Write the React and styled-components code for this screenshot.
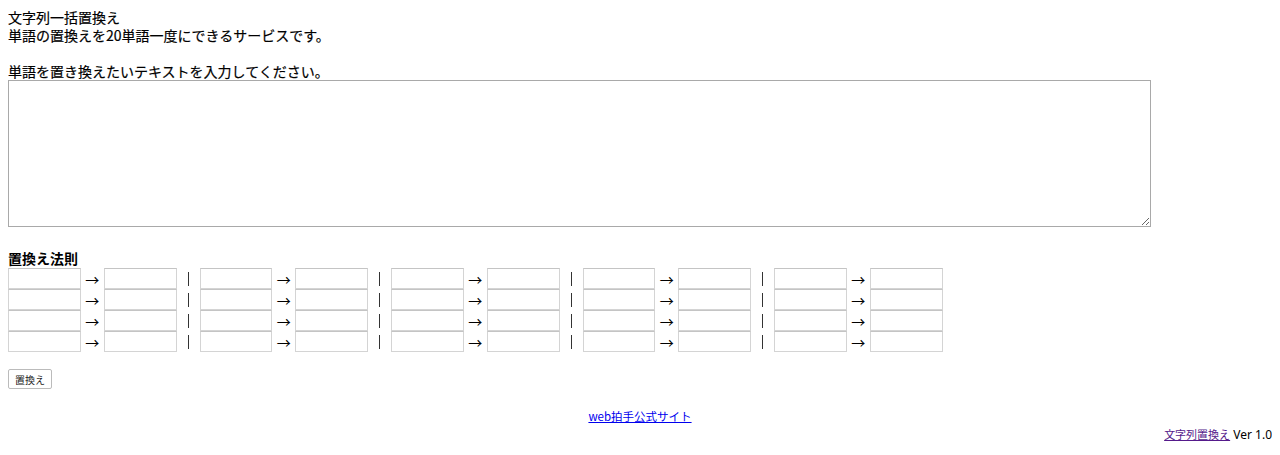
import React from 'react'
import styled, { createGlobalStyle } from 'styled-components'

const GlobalStyle = createGlobalStyle`
  body {
    margin: 8px;
    font-family: "Noto Sans CJK JP", "Noto Sans", sans-serif;
    font-size: 14px;
    line-height: 18px;
    color: #000;
    background: #fff;
  }
`

const groups = [0, 1, 2, 3, 4]
const rows = [0, 1, 2, 3]

function App() {
  return (
    <>
      <GlobalStyle />
      <Intro>
        <Line>文字列一括置換え</Line>
        <Line>単語の置換えを20単語一度にできるサービスです。</Line>
        <Line>&nbsp;</Line>
        <Line>単語を置き換えたいテキストを入力してください。</Line>
      </Intro>
      <TextArea />
      <RuleTitle>置換え法則</RuleTitle>
      <Rules>
        {rows.map((r) => (
          <RuleRow key={r}>
            {groups.map((g) => (
              <Pair key={g}>
                <Field type='text' />
                <Arrow>→</Arrow>
                <Field type='text' />
                {g < groups.length - 1 && <Sep />}
              </Pair>
            ))}
          </RuleRow>
        ))}
      </Rules>
      <Button>置換え</Button>
      <Center>
        <Link href='#'>web拍手公式サイト</Link>
      </Center>
      <Footer>
        <Visited href='#'>文字列置換え</Visited> Ver 1.0
      </Footer>
    </>
  )
}

const Intro = styled.div`
  display: flex;
  flex-direction: column;
`

const Line = styled.div`
  height: 18px;
  font-weight: 400;
  -webkit-text-stroke: 0.2px #000;
`

const TextArea = styled.textarea`
  display: block;
  box-sizing: border-box;
  width: 1143px;
  height: 147px;
  margin: 0;
  border: 1px solid #a9a9a9;
  resize: both;
`

const RuleTitle = styled.div`
  margin-top: 22px;
  height: 19px;
  font-weight: 700;
  line-height: 19px;
`

const Rules = styled.div`
  display: flex;
  flex-direction: column;
`

const RuleRow = styled.div`
  display: flex;
  align-items: center;
  height: 21px;
`

const Pair = styled.div`
  display: flex;
  align-items: center;
`

const Field = styled.input`
  box-sizing: border-box;
  width: 72.75px;
  height: 21px;
  margin: 0;
  padding: 1px 2px;
  border: 1px solid #d4d4d4;
  border-top-color: #c4c4c4;
  background: #fff;
`

const Arrow = styled.span`
  width: 23px;
  text-align: center;
  font-size: 14px;
`

const Sep = styled.span`
  display: flex;
  justify-content: center;
  width: 23px;
  &::before {
    content: '';
    width: 1px;
    height: 14px;
    background: #333;
  }
`

const Button = styled.button`
  display: block;
  margin-top: 17px;
  height: 20px;
  padding: 0 6px;
  font-family: "Noto Sans CJK JP", sans-serif;
  font-size: 10px;
  color: #222;
  background: #fff;
  border: 1px solid #bbb;
  border-radius: 2px;
`

const Center = styled.div`
  margin-top: 18px;
  text-align: center;
  font-size: 11.5px;
`

const Link = styled.a`
  color: #0000ee;
`

const Footer = styled.div`
  margin-top: 0px;
  text-align: right;
  font-family: "Noto Sans", "Noto Sans CJK JP", sans-serif;
  font-size: 12px;
`

const Visited = styled.a`
  color: #551a8b;
  font-family: "Noto Sans CJK JP", sans-serif;
  font-size: 11px;
`

export default App
